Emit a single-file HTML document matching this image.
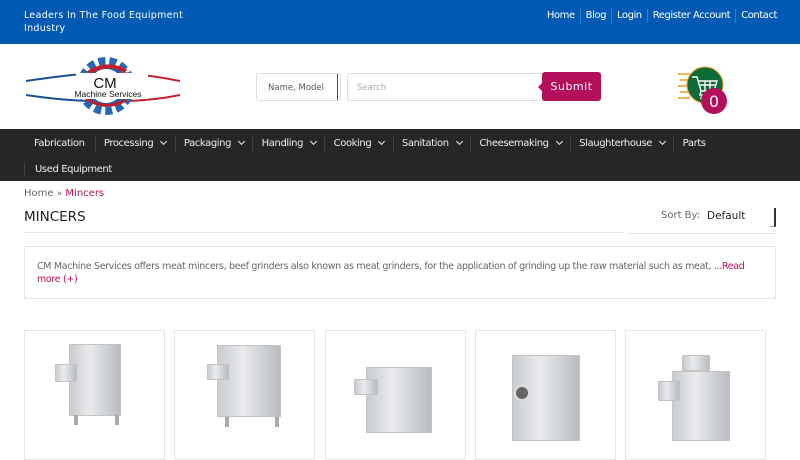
<!DOCTYPE html>
<html><head><meta charset="utf-8"><style>
*{margin:0;padding:0;box-sizing:border-box}
body{width:800px;height:450px;overflow:hidden;background:#fff;font-family:"DejaVu Sans","Liberation Sans",sans-serif;position:relative}
.top{position:absolute;left:0;top:0;width:800px;height:44px;background:#0059b3;color:#fff}
.tag{position:absolute;left:24px;top:9px;font-size:9.5px;line-height:13px;width:170px;letter-spacing:0.3px}
.links{position:absolute;right:18px;top:9px;font-size:10px;display:flex;letter-spacing:-0.45px}
.links span{padding:0 5px;border-left:1px solid #2f7fd0;line-height:14px}
.links span:first-child{border:none}
.nav{position:absolute;left:0;top:129px;width:800px;height:52px;background:#262626;color:#eee;font-size:10px;letter-spacing:-0.4px}
.nav .row{position:absolute;left:24px;display:flex}
.nav .it{padding:0 8.3px;border-left:1px solid #444;line-height:14px}
.nav .it:first-child{border:none;padding-left:10px;padding-right:10px}
.chev{display:inline-block;width:5px;height:5px;border-right:1.8px solid #eee;border-bottom:1.8px solid #eee;transform:rotate(45deg);margin-left:8px;position:relative;top:-2px}
.sel{position:absolute;left:256px;top:73px;width:85px;height:28px;border:1px solid #ddd;border-radius:3px;font-size:8.5px;color:#555;padding:9px 0 0 11px}
.sel:after{content:"";position:absolute;right:2px;top:0;width:3px;height:26px;border-right:1.5px solid #444}
.srch{position:absolute;left:347px;top:73px;width:200px;height:28px;border:1px solid #ddd;border-radius:3px;font-size:8.5px;color:#aaa;padding:9px 0 0 9px}
.btn{position:absolute;left:542px;top:72px;width:59px;height:29px;background:#b40f5a;color:#fff;font-size:11px;border-radius:3px;text-align:center;line-height:29px;letter-spacing:.5px}
.btn:before{content:"";position:absolute;left:-4px;top:11px;border:4px solid transparent;border-right-color:#b40f5a;border-left:0}
.hd{position:absolute;left:24px;top:209px;font-size:13.5px;color:#222}
.desc{position:absolute;left:24px;top:246px;width:752px;height:53px;border:1px solid #e6e6e6;font-size:9.5px;letter-spacing:-0.33px;line-height:13px;color:#666;padding:13px 12px}
.card{position:absolute;top:330px;width:141px;height:130px;border:1px solid #e6e6e6}
.m{position:absolute;background:linear-gradient(90deg,#c9ccd0,#e9ebed 40%,#b8bcc1);border:1px solid #c4c4c4}
.leg{position:absolute;width:4px;height:10px;background:#aaa}
</style></head><body>
<div class="top"><div class="tag">Leaders In The Food Equipment Industry</div>
<div class="links"><span>Home</span><span>Blog</span><span>Login</span><span>Register Account</span><span>Contact</span></div></div>
<svg style="position:absolute;left:26px;top:57px" width="154" height="60" viewBox="0 0 154 60">
<path d="M0 24 Q40 18 70 16" stroke="#1b4f99" stroke-width="2" fill="none"/>
<path d="M0 38 Q40 44 70 44" stroke="#1b4f99" stroke-width="2" fill="none"/>
<path d="M95 16 Q125 18 154 24" stroke="#c0202a" stroke-width="2" fill="none"/>
<path d="M95 44 Q125 44 154 38" stroke="#c0202a" stroke-width="2" fill="none"/>
<circle cx="80" cy="29" r="25" fill="none" stroke="#2669b3" stroke-width="8" stroke-dasharray="7 4"/>
<circle cx="80" cy="29" r="19" fill="none" stroke="#1f5fae" stroke-width="4"/>
<path d="M62 16 Q80 4 100 14" stroke="#c0202a" stroke-width="4" fill="none"/>
<path d="M60 42 Q80 54 100 43" stroke="#c0202a" stroke-width="3" fill="none"/>
<rect x="50" y="16" width="72" height="26" fill="#fff"/>
<text x="79" y="31" font-family="Liberation Sans" font-size="15" text-anchor="middle" fill="#111">CM</text>
<text x="82" y="40" font-family="Liberation Sans" font-size="8.5" text-anchor="middle" fill="#111">Machine Services</text>
</svg>
<div class="sel">Name, Model</div><div class="srch">Search</div><div class="btn">Submit</div>
<svg style="position:absolute;left:676px;top:66px" width="54" height="50">
<g stroke="#f39a22" stroke-width="1.5"><line x1="2" y1="8" x2="14" y2="8"/><line x1="4" y1="14" x2="14" y2="14"/><line x1="2" y1="20" x2="14" y2="20"/><line x1="4" y1="26" x2="14" y2="26"/><line x1="2" y1="32" x2="14" y2="32"/></g>
<circle cx="29" cy="19" r="18" fill="#0e6b37" stroke="#f39a22" stroke-width="1"/>
<path d="M16 11h5l4 14h13l3-10H22M25 25l-1 4h15M23 19h16M29 15v10M34 15v10" stroke="#fff" stroke-width="1.4" fill="none"/>
<circle cx="26" cy="32" r="1.8" fill="#fff"/><circle cx="37" cy="32" r="1.8" fill="#fff"/>
<circle cx="38" cy="35" r="13" fill="#b40f5a"/>
<text x="38" y="41" font-family="DejaVu Sans" font-size="16" fill="#fff" text-anchor="middle">0</text>
</svg>
<div class="nav">
<div class="row" style="top:8px"><span class="it">Fabrication</span><span class="it">Processing<i class="chev"></i></span><span class="it">Packaging<i class="chev"></i></span><span class="it">Handling<i class="chev"></i></span><span class="it">Cooking<i class="chev"></i></span><span class="it">Sanitation<i class="chev"></i></span><span class="it">Cheesemaking<i class="chev"></i></span><span class="it">Slaughterhouse<i class="chev"></i></span><span class="it">Parts</span></div>
<div class="row" style="top:34px"><span class="it" style="border-left:1px solid #444;padding-left:10px">Used Equipment</span></div>
</div>
<div style="position:absolute;left:24px;top:188px;font-size:10px;color:#666">Home <span style="font-size:9px">»</span> <span style="color:#b40f5a">Mincers</span></div>
<div class="hd">MINCERS</div>
<div style="position:absolute;left:24px;top:232px;width:600px;border-top:1px solid #e6e6e6"></div>
<div style="position:absolute;left:626px;top:233px;width:150px;border-top:1px solid #e6e6e6"></div>
<div style="position:absolute;left:661px;top:210px;font-size:10px;color:#666">Sort By:</div>
<div style="position:absolute;left:707px;top:210px;font-size:10.5px;color:#222">Default</div>
<div style="position:absolute;left:770px;top:208px;width:6px;height:19px;border-right:2px solid #333;border-bottom:1px solid #999"></div>
<div class="desc">CM Machine Services offers meat mincers, beef grinders also known as meat grinders, for the application of grinding up the raw material such as meat, <span style="color:#b40f5a">...Read more (+)</span></div>
<div class="card" style="left:24px"><div class="m" style="left:44px;top:13px;width:52px;height:72px"></div><div class="m" style="left:30px;top:33px;width:22px;height:18px"></div><div class="leg" style="left:49px;top:84px"></div><div class="leg" style="left:90px;top:84px"></div></div>
<div class="card" style="left:174px"><div class="m" style="left:42px;top:14px;width:64px;height:72px"></div><div class="m" style="left:32px;top:33px;width:22px;height:16px"></div><div class="leg" style="left:50px;top:86px"></div><div class="leg" style="left:100px;top:86px"></div></div>
<div class="card" style="left:325px"><div class="m" style="left:40px;top:36px;width:66px;height:66px"></div><div class="m" style="left:28px;top:48px;width:24px;height:16px"></div></div>
<div class="card" style="left:475px"><div class="m" style="left:36px;top:24px;width:68px;height:86px"></div><div style="position:absolute;left:38px;top:54px;width:16px;height:16px;border-radius:50%;background:#666;border:2px solid #ddd"></div></div>
<div class="card" style="left:625px"><div class="m" style="left:46px;top:40px;width:58px;height:70px"></div><div class="m" style="left:32px;top:50px;width:22px;height:20px"></div><div class="m" style="left:56px;top:24px;width:28px;height:16px"></div></div>
</body></html>
